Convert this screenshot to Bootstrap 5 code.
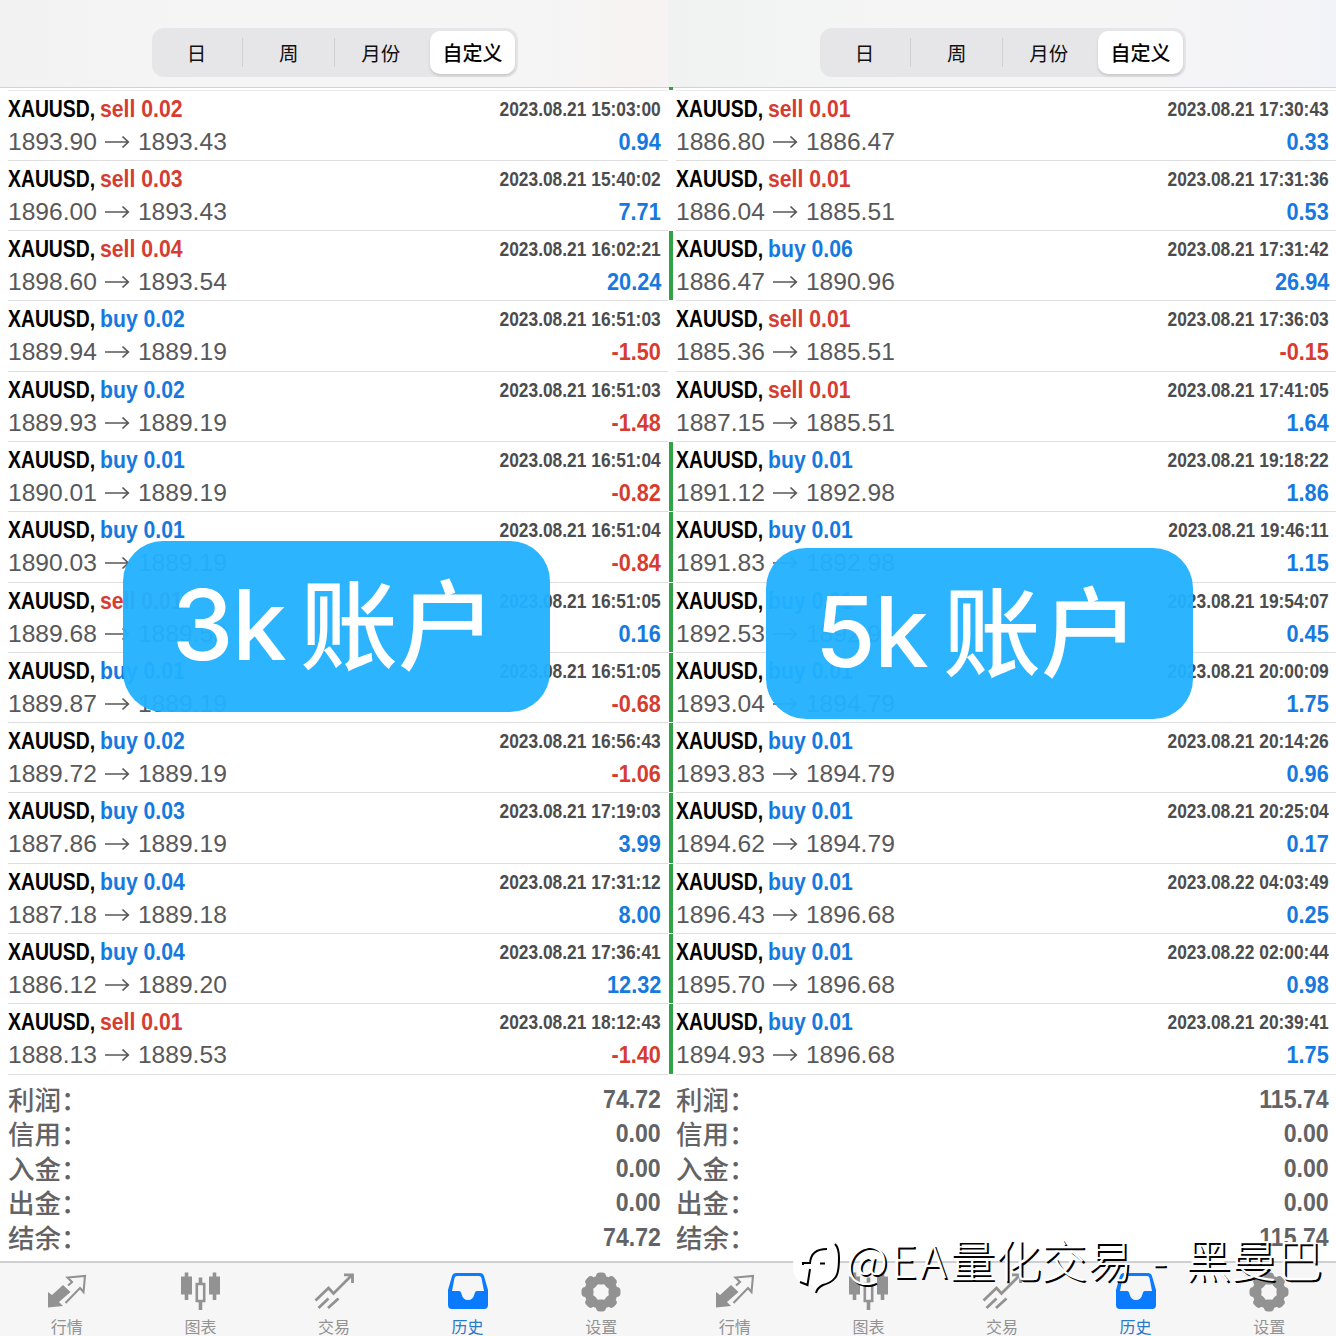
<!DOCTYPE html>
<html lang="zh-CN">
<head>
<meta charset="utf-8">
<meta name="viewport" content="width=device-width, initial-scale=1">
<title>历史</title>
<link href="https://cdn.jsdelivr.net/npm/bootstrap@5.3.0/dist/css/bootstrap.min.css" rel="stylesheet">
<style>
body{font-family:"Liberation Sans","Noto Sans CJK SC",sans-serif;width:1336px;height:1336px;overflow:hidden;background:#fff;line-height:1}
.pane{width:668px;height:1336px}
.topbar{height:88px;padding-top:28px;background:linear-gradient(90deg,#f2f2f2,#f6f5f6 30%,#f5f5f5 80%,#f8f2f2);border-bottom:1px solid #d3d3d5}
.pane-b .topbar{background:linear-gradient(90deg,#f0f2f1,#f5f5f6 35%,#f5f5f6 75%,#f2f3f8)}
.seg{width:366px;height:49px;margin-left:152px;background:#e6e6e8;border-radius:12px;padding:3px;font:400 19.5px/43px "Noto Sans CJK SC",sans-serif;color:#111}
.seg>div{width:92px;text-align:center;position:relative}
.seg>div:first-child{width:88px;padding-right:5px}
.seg>div:nth-child(3){padding-left:1px}
.seg .rule::after{content:"";position:absolute;right:0;top:7px;height:29px;width:1px;background:#d0d0d3}
.seg .picked{background:#fff;border-radius:10px;width:85px;margin-left:4px;font-weight:500;font-size:20px;color:#000;box-shadow:0 2px 3px rgba(0,0,0,.13)}
.deals{padding-top:2.5px;position:relative}
.deal{height:70.31px;padding:1px 7px 0 8px;position:relative}
.deal::after{content:"";position:absolute;left:8px;right:0;bottom:0;height:1px;background:#dedee0}
.deals::before{content:"";display:block;height:1px;margin:-1px 0 0 8px;background:#ececee}
.filled::before{content:"";position:absolute;left:1px;top:0;bottom:1px;width:4px;background:#2fa345}
.pane-b .deals::after{content:"";position:absolute;left:1px;top:-1px;width:4px;height:3px;background:#2fa345}
.ln{height:33px;line-height:34px;white-space:nowrap}
.sym{width:92px;color:#000;font-weight:700;font-size:24.5px}
.sq{display:inline-block;transform-origin:0 50%}
.sym .sq{transform:scaleX(.79)}
.side{font-weight:700;font-size:24.5px}
.side .sq{transform:scaleX(.865)}
.when{font-weight:700;font-size:20px;color:#4c4c4e}
.r{transform-origin:100% 50%}
.when .sq{transform:scaleX(.868)}
.amt{font-weight:700;font-size:24.5px}
.amt .sq{transform:scaleX(.885)}
.up{color:#1579e0}.down{color:#d63c30}
.px{font-size:24.6px;color:#58585a;padding-top:1px}
.px svg{width:26px;height:16px;margin:0 8px 0 7px}
.totals{height:173px;margin-top:7px;padding:0 7px 0 8px}
.totals .ln{height:34.5px;line-height:34.5px;color:#636365}
.totals .lbl{font:500 26.5px/33px "Noto Sans CJK SC",sans-serif}
.totals .amt{font-size:25.5px}
.totals .amt .sq{transform:scaleX(.905)}
.tabs{height:75px;border-top:2px solid #cfcfd1;background:#f6f6f6;color:#929292}
.tabs svg{width:42px;height:42px;display:block}
.tabs .tab{width:133.6px;padding-top:8px;font:400 16px/20px "Noto Sans CJK SC",sans-serif}
.tabs .tab span{margin-top:3px}
.tabs .on{color:#0a7aff}
.tabs .on span{color:#2a78c8}
.tag{position:absolute;width:427px;height:171px;border-radius:40px;background:rgba(35,177,255,.955);color:#fff;z-index:3}
.tag-a{left:123px;top:541px}.tag-b{left:766px;top:548px}
.tag .num{font:500 98px/167px Inter,sans-serif;margin-left:49px;width:128px;white-space:nowrap;letter-spacing:-1.5px}
.tag .han{font:500 98px/156px "Noto Sans CJK SC",sans-serif;white-space:nowrap}
.wm{position:absolute;left:792px;top:1228px;z-index:4;color:#fff}
.wm svg{width:54px;height:72px}
.wm-txt{font:300 45.8px/60px "Noto Sans CJK SC",sans-serif;text-shadow:2px 2px 0 #000;white-space:pre}
.wm-lat{letter-spacing:2.8px}
.wm-dash{margin:0 8px 0 9px}
</style>
<script src="https://cdn.jsdelivr.net/npm/bootstrap@5.3.0/dist/js/bootstrap.bundle.min.js"></script>
</head>
<body class="position-relative">
<div class="d-flex" id="app"></div>

<div class="tag tag-a d-flex"><span class="num">3k</span><span class="han">账户</span></div>
<div class="tag tag-b d-flex"><span class="num">5k</span><span class="han">账户</span></div>

<div class="wm d-flex">
  <svg viewBox="0 0 54 72">
    <path d="M31 14Q46 13 48 27Q49 46 39 54Q27 57 24 65L20 57L9 56Q0 48 1 35Q4 17 31 14Z" fill="#fff"/>
    <path d="M11 37V35H18Q19 21 35 21M18 41L15.500 57L8 54M28 35.500H33M43 16Q47 20 47 30Q47 46 43 50Q39 55 31 57Q25 60 24 65" fill="none" stroke="#000" stroke-width="2"/>
  </svg>
  <span class="wm-txt"><span class="wm-lat">@EA</span>量化交易<span class="wm-dash"> - </span>黑曼巴</span>
</div>

<script>
const A = [
 ['sell 0.02','15:03:00','1893.90','1893.43','0.94'],
 ['sell 0.03','15:40:02','1896.00','1893.43','7.71'],
 ['sell 0.04','16:02:21','1898.60','1893.54','20.24'],
 ['buy 0.02','16:51:03','1889.94','1889.19','-1.50'],
 ['buy 0.02','16:51:03','1889.93','1889.19','-1.48'],
 ['buy 0.01','16:51:04','1890.01','1889.19','-0.82'],
 ['buy 0.01','16:51:04','1890.03','1889.19','-0.84'],
 ['sell 0.01','16:51:05','1889.68','1889.53','0.16'],
 ['buy 0.01','16:51:05','1889.87','1889.19','-0.68'],
 ['buy 0.02','16:56:43','1889.72','1889.19','-1.06'],
 ['buy 0.03','17:19:03','1887.86','1889.19','3.99'],
 ['buy 0.04','17:31:12','1887.18','1889.18','8.00'],
 ['buy 0.04','17:36:41','1886.12','1889.20','12.32'],
 ['sell 0.01','18:12:43','1888.13','1889.53','-1.40']];
const B = [
 ['sell 0.01','17:30:43','1886.80','1886.47','0.33'],
 ['sell 0.01','17:31:36','1886.04','1885.51','0.53'],
 ['buy 0.06','17:31:42','1886.47','1890.96','26.94',1],
 ['sell 0.01','17:36:03','1885.36','1885.51','-0.15'],
 ['sell 0.01','17:41:05','1887.15','1885.51','1.64'],
 ['buy 0.01','19:18:22','1891.12','1892.98','1.86',1],
 ['buy 0.01','19:46:11','1891.83','1892.98','1.15',1],
 ['buy 0.01','19:54:07','1892.53','1892.98','0.45',1],
 ['buy 0.01','20:00:09','1893.04','1894.79','1.75',1],
 ['buy 0.01','20:14:26','1893.83','1894.79','0.96',1],
 ['buy 0.01','20:25:04','1894.62','1894.79','0.17',1],
 ['buy 0.01','04:03:49','1896.43','1896.68','0.25',1,'22'],
 ['buy 0.01','02:00:44','1895.70','1896.68','0.98',1,'22'],
 ['buy 0.01','20:39:41','1894.93','1896.68','1.75',1]];
const arrow = '<svg viewBox="0 0 26 16"><path d="M1 8H24M18.500 2.500L24.300 8L18.500 13.500" fill="none" stroke="currentColor" stroke-width="1.7"/></svg>';
const deal = d => `<div class="deal ${d[5]?'filled':''}">
 <div class="ln d-flex justify-content-between"><div class="d-flex"><div class="sym"><span class="sq">XAUUSD,</span></div><div class="side ${d[0][0]=='s'?'down':'up'}"><span class="sq">${d[0]}</span></div></div><div class="when"><span class="sq r">2023.08.${d[6]||'21'} ${d[1]}</span></div></div>
 <div class="ln d-flex justify-content-between"><div class="px d-flex align-items-center"><span>${d[2]}</span>${arrow}<span>${d[3]}</span></div><div class="amt ${d[4][0]=='-'?'down':'up'}"><span class="sq r">${d[4]}</span></div></div></div>`;
const total = (l,v) => `<div class="ln d-flex justify-content-between"><span class="lbl">${l}：</span><span class="amt"><span class="sq r">${v}</span></span></div>`;
const gear = (() => {
  let s = '';
  for (let i = 0; i < 8; i++) s += `<rect x="16" y="1.500" width="10" height="12" rx="4" transform="rotate(${i*45} 21 21)"/>`;
  return `<g fill="currentColor">${s}</g><circle cx="21" cy="21" r="12.600" fill="none" stroke="currentColor" stroke-width="8"/>`;
})();
const icons = [
 ['行情','<path d="M2 21L6 24L17 14L24.500 21L13 31L17 35L2 36.500Z" fill="currentColor"/><path d="M19.500 32L34 17L37.500 21L39 5L21.500 6.500L26 11L22 14.500" fill="none" stroke="currentColor" stroke-width="2.1"/>'],
 ['图表','<g fill="currentColor"><path d="M5.700 1.500h3.600v4H13v18H9.300V29H5.700v-5.500H2v-18h3.700zM33.700 1.500h3.600v4H41v18h-3.700V29h-3.600v-5.500H30v-18h3.700z"/></g><path d="M21.500 6.500v6M21.500 31v8" stroke="currentColor" stroke-width="3.600"/><path d="M17.800 13h7.400v17h-7.400z" fill="none" stroke="currentColor" stroke-width="2.600"/>'],
 ['交易','<path d="M2.500 29.500L15.500 17L20.500 22.500L39 4M31 3.800H39.500V12M5.500 37L15.500 27.500M15 37L25.500 27.500" fill="none" stroke="currentColor" stroke-width="2.8"/>'],
 ['历史','<path fill="currentColor" fill-rule="evenodd" d="M9 2H33Q36 2 37 5L41 19V34Q41 38 37 38H5Q1 38 1 34V19L5 5Q6 2 9 2ZM10 5Q8 5 7.500 7L5 20H12Q14 20 14.500 23Q16 29 21 29Q26 29 27.500 23Q28 20 30 20H37L34.500 7Q34 5 32 5Z"/>'],
 ['设置',gear]];
const tabs = icons.map((t,i)=>`<div class="tab d-flex flex-column align-items-center ${i==3?'on':''}"><svg viewBox="0 0 42 42">${t[1]}</svg><span>${t[0]}</span></div>`).join('');
const pane = (rows,sum,c) => `<section class="pane ${c} d-flex flex-column">
 <header class="topbar"><div class="seg d-flex"><div class="rule">日</div><div class="rule">周</div><div>月份</div><div class="picked">自定义</div></div></header>
 <main class="deals">${rows.map(deal).join('')}</main>
 <div class="totals">${total('利润',sum)}${total('信用','0.00')}${total('入金','0.00')}${total('出金','0.00')}${total('结余',sum)}</div>
 <nav class="tabs d-flex mt-auto">${tabs}</nav></section>`;
document.getElementById('app').innerHTML = pane(A,'74.72','pane-a') + pane(B,'115.74','pane-b');
</script>
</body>
</html>
